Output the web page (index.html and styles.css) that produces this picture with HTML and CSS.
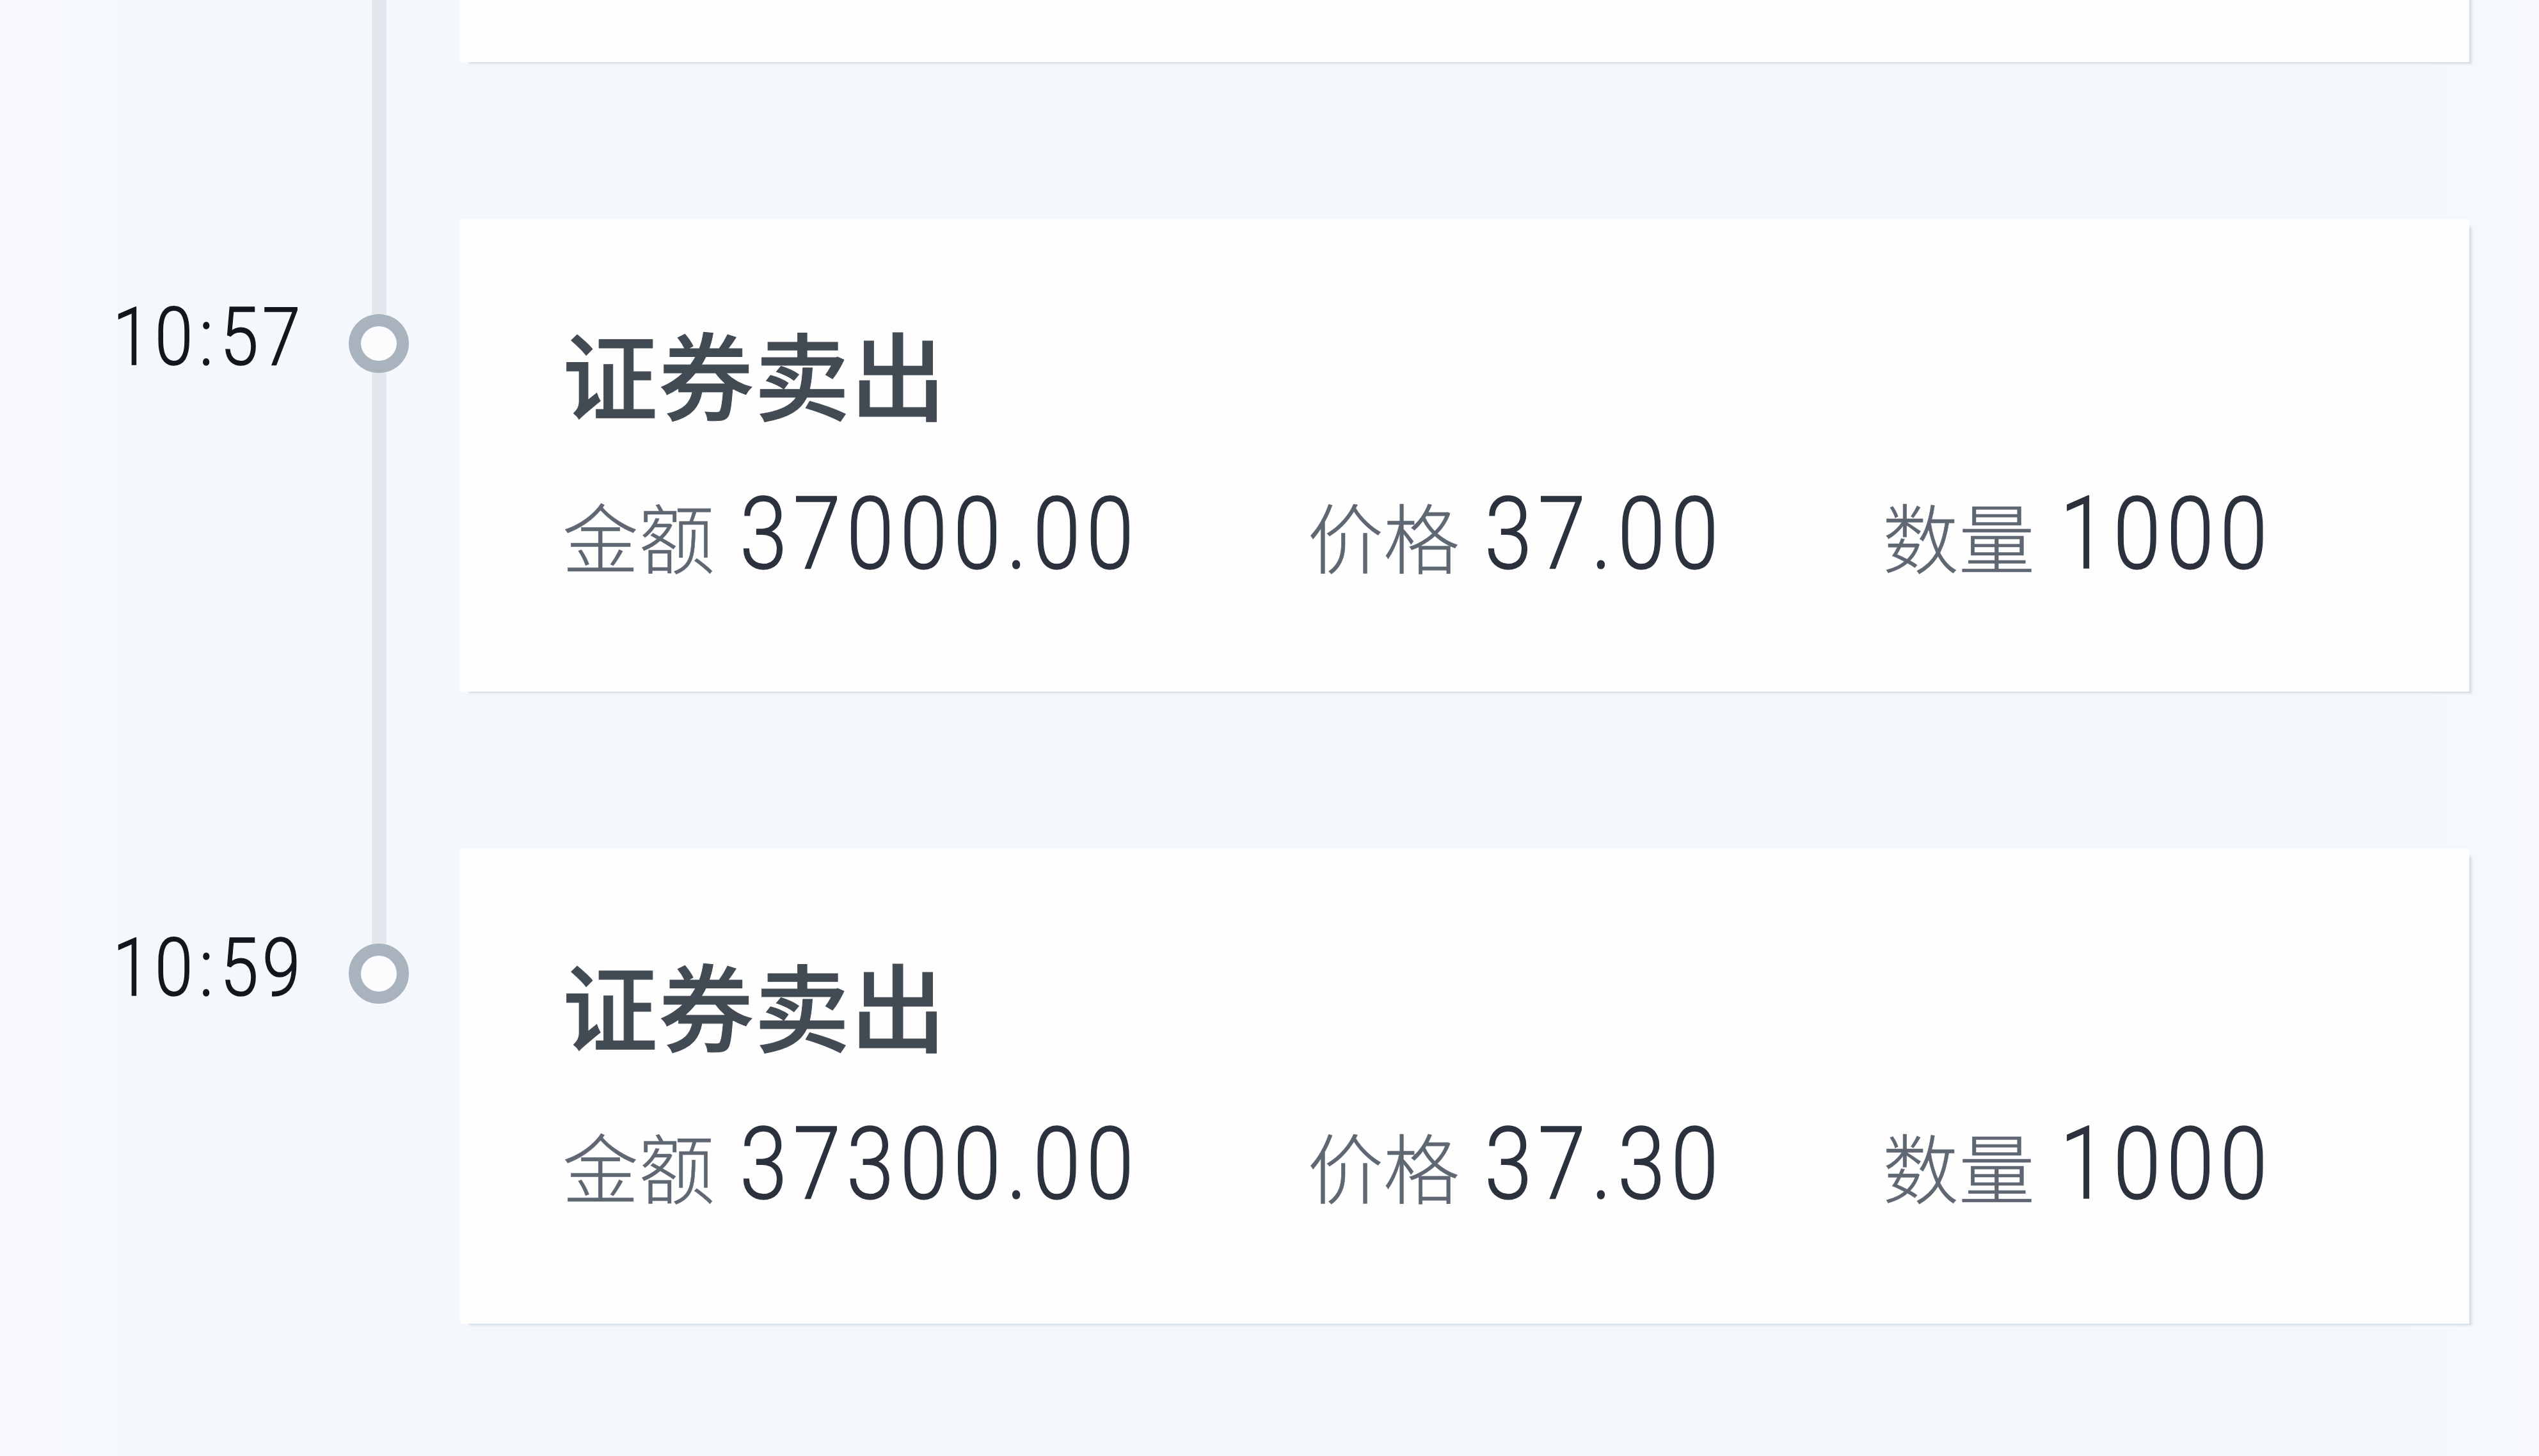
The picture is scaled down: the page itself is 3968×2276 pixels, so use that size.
FILE: index.html
```html
<!DOCTYPE html>
<html lang="zh-CN">
<head>
    <meta charset="UTF-8">
    <meta name="viewport" content="width=device-width, initial-scale=1.0">
    <title>成交记录</title>
    <link rel="stylesheet" href="styles.css">
</head>
<body>
    <div class="timeline">
        <div class="item item-first">
            <div class="time"></div>
            <div class="axis">
                <div class="line line-fill"></div>
            </div>
            <div class="card"></div>
        </div>

        <div class="item">
            <div class="time"><span class="digits">10<i>:</i>57</span></div>
            <div class="axis">
                <div class="line line-top"></div>
                <div class="dot"></div>
                <div class="line line-fill"></div>
            </div>
            <div class="card">
                <h2>证券卖出</h2>
                <div class="fields">
                    <div class="field"><span class="label">金额</span><span class="digits">37000.00</span></div>
                    <div class="field"><span class="label">价格</span><span class="digits">37.00</span></div>
                    <div class="field"><span class="label">数量</span><span class="digits">1000</span></div>
                </div>
            </div>
        </div>

        <div class="item item-last">
            <div class="time"><span class="digits">10<i>:</i>59</span></div>
            <div class="axis">
                <div class="line line-top"></div>
                <div class="dot"></div>
            </div>
            <div class="card">
                <h2>证券卖出</h2>
                <div class="fields">
                    <div class="field"><span class="label">金额</span><span class="digits">37300.00</span></div>
                    <div class="field"><span class="label">价格</span><span class="digits">37.30</span></div>
                    <div class="field"><span class="label">数量</span><span class="digits">1000</span></div>
                </div>
            </div>
        </div>
    </div>
</body>
</html>
```
FILE: styles.css
```css
* {
    box-sizing: border-box;
}
body, html {
    height: 100%;
    margin: 0;
    overflow: hidden;
    font-family: "Noto Sans CJK SC", sans-serif;
    background-color: #f4f8fc;
}
.timeline {
    height: 2276px;
    background: linear-gradient(90deg, #f7f8fc 0, #f4f8fc 240px, #f4f8fc 3750px, #f6f8fc 100%);
}
.item {
    display: grid;
    grid-template-columns: 545px 94px 3220px;
    height: 984px;
}
.item-first {
    height: 342px;
}
.item-last {
    height: 950px;
}
.card {
    height: 739px;
    margin-left: 80px;
    padding: 129px 0 0 160px;
    background-color: #fefefe;
    box-shadow: 9px 8px 3px -5px #d8dfe6;
}
.item-first .card {
    height: 127px;
    margin-top: -30px;
    padding: 0;
}
.item-last .card {
    height: 743px;
    padding-top: 132px;
}
.axis {
    display: flex;
    flex-direction: column;
    align-items: center;
}
.line {
    width: 23px;
    background-color: #e2e7ed;
}
.line-top {
    height: 149px;
}
.line-fill {
    flex: 1;
}
.dot {
    width: 94px;
    height: 92px;
    border: 19px solid #a8b3bd;
    border-radius: 50%;
    background-color: #fcfcfe;
}
.item-last .dot {
    height: 94px;
}
/* narrow figures */
.digits {
    display: inline-block;
    font-family: Roboto, sans-serif;
    font-weight: 300;
    transform: scaleX(0.85);
    transform-origin: 0 50%;
    white-space: nowrap;
    -webkit-text-stroke: 1.5px currentColor;
}
.time {
    padding: 120px 0 0 176px;
    color: #14161d;
}
.item-last .time {
    padding-top: 122px;
}
.time .digits {
    font-size: 127px;
    line-height: 130px;
    letter-spacing: 7px;
}
.time i {
    font-style: normal;
    padding: 0 5px 0 4px;
}
h2 {
    margin: 0;
    font-size: 149px;
    font-weight: 500;
    line-height: 220px;
    letter-spacing: 1px;
    color: #424a53;
    -webkit-text-stroke: 1px currentColor;
}
.fields {
    display: grid;
    grid-template-columns: 1164px 899px 700px;
    margin-top: 48px;
}
.field {
    display: flex;
    align-items: baseline;
    white-space: nowrap;
}
.item-last .fields {
    margin-top: 46px;
}
.label {
    width: 277px;
    font-size: 119px;
    font-weight: 300;
    line-height: 190px;
    color: #5f6773;
    -webkit-text-stroke: 0.5px currentColor;
}
.field .digits {
    font-size: 158px;
    line-height: 190px;
    letter-spacing: 10.5px;
    color: #2b323d;
}
```
